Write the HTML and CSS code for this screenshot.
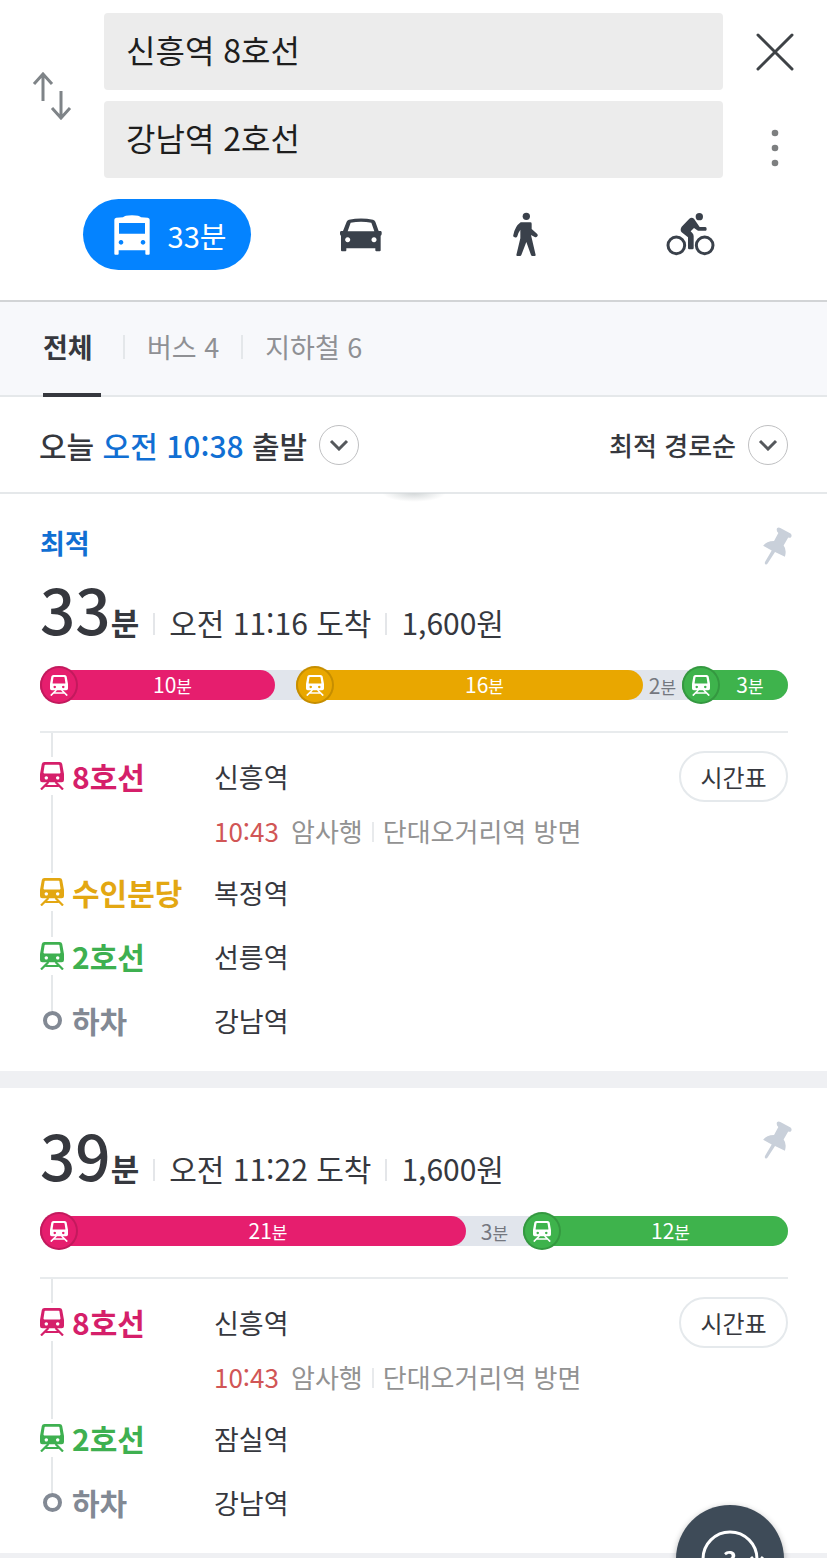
FILE: index.html
```html
<!DOCTYPE html>
<html lang="ko">
<head>
    <meta charset="UTF-8">
    <meta name="viewport" content="width=device-width, initial-scale=1.0">
    <title>신흥역 8호선 - 강남역 2호선</title>
    <link rel="stylesheet" href="styles.css">
</head>
<body>
    <!-- Shared icons -->
    <svg class="symbols" aria-hidden="true">
        <symbol id="train" viewBox="0 0 24 28">
            <path fill-rule="evenodd" d="M4.500 0h15q2.300 0 2.700 2L24 12v6q0 2.300-2.300 2.300H2.300Q0 20.300 0 18v-6L1.800 2Q2.200 0 4.500 0zM5.200 2.700Q4.700 2.700 4.600 3.200L3.500 10.600Q3.400 11.400 4.200 11.400H19.800Q20.600 11.400 20.500 10.600L19.400 3.200Q19.300 2.700 18.800 2.700zM6.300 14.200a1.700 1.700 0 1 0 .01 0zM17.700 14.200a1.700 1.700 0 1 0 .01 0z"/>
            <path d="M8.500 20L1 27.500M15.500 20l7.500 7.500M5.500 24h13" fill="none" stroke="currentColor" stroke-width="2.200"/>
        </symbol>
        <symbol id="pin" viewBox="0 0 87 115">
            <path d="M42 4Q46 0 52 3L83 20Q88 24 85 30Q82 34 76 32L62 56Q72 68 66 90L36 76L14 110Q10 116 6 112Q4 110 6 105L26 71L0 57Q10 42 33 42L46 18Q39 12 42 4z"/>
        </symbol>
        <symbol id="chevron" viewBox="0 0 20 12">
            <path d="M2 2l8 8 8-8" fill="none" stroke="currentColor" stroke-width="3"/>
        </symbol>
    </svg>

    <header class="search">
        <div class="search-row">
            <button class="swap" aria-label="출발지 도착지 바꾸기">
                <svg width="40" height="48" viewBox="0 0 40 48"><path d="M11 29V3M2 12l9-10 9 10M29 19v26M20 36l9 10 9-10"/></svg>
            </button>
            <div class="fields">
                <input type="text" aria-label="출발지" value="신흥역 8호선">
                <input type="text" aria-label="도착지" value="강남역 2호선">
            </div>
            <div class="search-side">
                <button class="close" aria-label="닫기">
                    <svg width="38" height="38" viewBox="0 0 38 38"><path d="M2 2l34 34M36 2L2 36"/></svg>
                </button>
                <button class="more" aria-label="더보기">
                    <svg width="8" height="38" viewBox="0 0 8 38"><circle cx="4" cy="4" r="3.300"/><circle cx="4" cy="19" r="3.300"/><circle cx="4" cy="34" r="3.300"/></svg>
                </button>
            </div>
        </div>
        <nav class="modes">
            <button class="mode active">
                <svg width="36" height="40" viewBox="345 644 108 120"><path fill-rule="evenodd" d="M372 651Q376 645 399 645T426 651L446 652Q452 653 452 658V760Q452 763 449 763H442Q439 763 439 760V750H359V760Q359 763 356 763H349Q346 763 346 760V658Q346 653 352 652zM360 668V700H438V668zM366 719a7 7 0 1 0 .1 0zM432 719a7 7 0 1 0 .1 0z"/></svg>
                <span>33분</span>
            </button>
            <button class="mode" aria-label="자동차">
                <svg width="42" height="34" viewBox="1021 653 126 102"><path fill-rule="evenodd" d="M1048 658Q1084 651 1120 658Q1125 659 1127 664L1137 692H1143Q1147 693 1146 700Q1146 705 1143 706V750Q1143 753 1140 753H1130Q1127 753 1127 750V744H1040V750Q1040 753 1037 753H1027Q1024 753 1024 750V706Q1021 705 1021 700Q1020 693 1024 692H1030L1041 664Q1043 659 1048 658zM1053 667L1044 693H1124L1115 667Q1084 662 1053 667zM1044 711a7.500 7.500 0 1 0 .1 0zM1123 711a7.500 7.500 0 1 0 .1 0z"/></svg>
            </button>
            <button class="mode" aria-label="도보">
                <svg width="25" height="45" viewBox="280 637 75 135"><circle cx="320" cy="650" r="11"/><path d="M303 668H332Q336 668 336 672V688L352 702Q356 706 353 710T345 712L334 706L348 766Q348 769 345 769H338Q335 769 334 766L320 727L305 766Q304 769 301 769H293Q290 769 290 766L302 716V690Q296 698 293 710Q291 715 285 713T281 706Q286 680 303 668z"/></svg>
            </button>
            <button class="mode" aria-label="자전거">
                <svg width="49" height="45" viewBox="738 636 147 135"><g fill="none" stroke="currentColor" stroke-width="9"><circle cx="769" cy="736" r="25"/><circle cx="854" cy="736" r="25"/></g><circle cx="838" cy="650" r="11"/><path d="M808 656Q815 650 822 656L839 681H856Q860 681 860 687T856 692H834L822 684L812 694L817 699Q821 703 821 709V744Q821 748 817 748H808Q804 748 804 744V712L785 697Q779 690 785 680z"/></svg>
            </button>
        </nav>
    </header>

    <nav class="tabs">
        <a href="#" class="tab active">전체</a>
        <a href="#" class="tab">버스 4</a>
        <a href="#" class="tab">지하철 6</a>
    </nav>

    <div class="filters">
        <button class="filter">
            <span>오늘 <b>오전 10:38</b> 출발</span>
            <span class="round"><svg width="20" height="12"><use href="#chevron"/></svg></span>
        </button>
        <button class="filter sort">
            <span>최적 경로순</span>
            <span class="round"><svg width="20" height="12"><use href="#chevron"/></svg></span>
        </button>
    </div>

    <main>
        <article class="route">
            <div class="route-head">
                <div>
                    <p class="badge">최적</p>
                    <h2 class="summary">
                        <span class="total">33<small>분</small></span>
                        <span class="info">오전 11:16 도착</span>
                        <span class="info">1,600원</span>
                    </h2>
                </div>
                <button class="pin" aria-label="경로 고정"><svg width="29" height="38"><use href="#pin"/></svg></button>
            </div>
            <div class="bar">
                <div class="seg line8" style="flex-grow: 235"><span class="stop"><svg width="18" height="21"><use href="#train"/></svg></span><span class="time">10<small>분</small></span></div>
                <div class="walk" style="flex-grow: 21"></div>
                <div class="seg suin" style="flex-grow: 347"><span class="stop"><svg width="18" height="21"><use href="#train"/></svg></span><span class="time">16<small>분</small></span></div>
                <div class="walk" style="flex-grow: 39">2<small>분</small></div>
                <div class="seg line2" style="flex-grow: 106"><span class="stop"><svg width="18" height="21"><use href="#train"/></svg></span><span class="time">3<small>분</small></span></div>
            </div>
            <ol class="steps">
                <li class="step first">
                    <span class="line text8"><span class="mark"><svg width="24" height="28"><use href="#train"/></svg></span>8호선</span>
                    <span class="station">신흥역</span>
                    <button class="timetable">시간표</button>
                    <p class="next"><em>10:43</em> <span>암사행</span> <span>단대오거리역 방면</span></p>
                </li>
                <li class="step">
                    <span class="line text-suin"><span class="mark"><svg width="24" height="28"><use href="#train"/></svg></span>수인분당</span>
                    <span class="station">복정역</span>
                </li>
                <li class="step">
                    <span class="line text2"><span class="mark"><svg width="24" height="28"><use href="#train"/></svg></span>2호선</span>
                    <span class="station">선릉역</span>
                </li>
                <li class="step last">
                    <span class="line"><span class="mark"><i class="dot"></i></span>하차</span>
                    <span class="station">강남역</span>
                </li>
            </ol>
        </article>

        <article class="route">
            <div class="route-head">
                <h2 class="summary">
                    <span class="total">39<small>분</small></span>
                    <span class="info">오전 11:22 도착</span>
                    <span class="info">1,600원</span>
                </h2>
                <button class="pin" aria-label="경로 고정"><svg width="29" height="38"><use href="#pin"/></svg></button>
            </div>
            <div class="bar">
                <div class="seg line8" style="flex-grow: 426"><span class="stop"><svg width="18" height="21"><use href="#train"/></svg></span><span class="time">21<small>분</small></span></div>
                <div class="walk" style="flex-grow: 57">3<small>분</small></div>
                <div class="seg line2" style="flex-grow: 265"><span class="stop"><svg width="18" height="21"><use href="#train"/></svg></span><span class="time">12<small>분</small></span></div>
            </div>
            <ol class="steps">
                <li class="step first">
                    <span class="line text8"><span class="mark"><svg width="24" height="28"><use href="#train"/></svg></span>8호선</span>
                    <span class="station">신흥역</span>
                    <button class="timetable">시간표</button>
                    <p class="next"><em>10:43</em> <span>암사행</span> <span>단대오거리역 방면</span></p>
                </li>
                <li class="step">
                    <span class="line text2"><span class="mark"><svg width="24" height="28"><use href="#train"/></svg></span>2호선</span>
                    <span class="station">잠실역</span>
                </li>
                <li class="step last">
                    <span class="line"><span class="mark"><i class="dot"></i></span>하차</span>
                    <span class="station">강남역</span>
                </li>
            </ol>
        </article>
    </main>

    <button class="refresh" aria-label="새로고침">
        <svg width="72" height="60" viewBox="0 0 72 60"><circle cx="36" cy="30" r="27"/><path d="M57 28l6 7 6-7"/></svg>
        <span>3</span>
    </button>
</body>
</html>
```
FILE: styles.css
```css
* {
    box-sizing: border-box;
}
body {
    font-family: "Noto Sans CJK KR", sans-serif;
    margin: 0;
    background-color: #eff0f3;
    color: #36383e;
    overflow-x: hidden;
}
button {
    font-family: inherit;
    color: inherit;
    padding: 0;
    background: none;
    border: none;
    cursor: pointer;
}
svg {
    display: block;
    fill: currentColor;
}
h2, p, ol {
    margin: 0;
    padding: 0;
    font-weight: 400;
}
.symbols {
    display: none;
}

/* Search header */
.search {
    background: #fff;
    padding-top: 13px;
    border-bottom: 2px solid #d2d4d6;
}
.search-row {
    display: flex;
}
.swap,
.search-side {
    width: 104px;
    display: flex;
    align-items: center;
    justify-content: center;
}
.swap svg {
    fill: none;
    stroke: #7f8488;
    stroke-width: 3;
}
.fields {
    flex: 1;
    display: flex;
    flex-direction: column;
    gap: 11px;
}
.fields input {
    width: 100%;
    height: 77px;
    padding: 0 22px 6px;
    border: none;
    border-radius: 4px;
    background: #ececec;
    color: #1e1e1e;
    font-family: inherit;
    font-size: 32px;
}
.search-side {
    flex-direction: column;
    justify-content: space-between;
}
.search-side button {
    display: flex;
    align-items: center;
    justify-content: center;
    width: 60px;
}
.close {
    height: 77px;
}
.close svg {
    stroke: #3e4246;
    stroke-width: 3;
    stroke-linecap: round;
}
.more {
    height: 60px;
    color: #7d7f80;
}
.modes {
    display: grid;
    grid-template-columns: 195px 1fr 1fr 1fr;
    padding: 21px 54px 30px 83px;
    color: #3a414b;
}
.mode {
    display: flex;
    align-items: center;
    justify-content: center;
    gap: 18px;
    height: 71px;
    font-size: 29px;
}
.mode.active {
    width: 168px;
    padding-left: 6px;
    border-radius: 36px;
    background: #0483ff;
    color: #fff;
}

/* Tabs */
.tabs {
    display: flex;
    height: 95px;
    padding-left: 43px;
    background: #f7f8fb;
    border-bottom: 2px solid #e5e8ea;
}
.tab {
    display: flex;
    align-items: center;
    height: 95px;
    padding-bottom: 6px;
    color: #8f9094;
    font-size: 27px;
    text-decoration: none;
}
.tab.active {
    width: 58px;
    padding-bottom: 2px;
    border-bottom: 4px solid #36383e;
    color: #36383e;
    font-weight: 700;
}
.tab + .tab::before {
    content: "";
    width: 2px;
    height: 24px;
    margin: 0 22px;
    background: #e4e7ea;
}

/* Departure time and sorting */
.filters {
    display: flex;
    justify-content: space-between;
    align-items: center;
    position: relative;
    height: 97px;
    padding: 0 39px;
    background: #fff;
    border-bottom: 2px solid #e5e8ea;
}
.filters::after {
    content: "";
    position: absolute;
    left: 50%;
    top: 96px;
    width: 64px;
    height: 9px;
    margin-left: -32px;
    background: radial-gradient(ellipse at top, #d3d7d8, transparent 70%);
}
.filter {
    display: flex;
    align-items: center;
    gap: 12px;
    font-size: 30px;
    font-weight: 500;
}
.filter b {
    color: #116fd3;
    font-weight: 500;
}
.filter.sort {
    font-size: 26px;
}
.round {
    display: flex;
    align-items: center;
    justify-content: center;
    width: 40px;
    height: 40px;
    border: 1px solid #bfc0c2;
    border-radius: 50%;
    color: #55585c;
}

/* Route cards */
.route {
    padding: 33px 39px 19px 40px;
    background: #fff;
}
.route + .route {
    margin-top: 17px;
}
.route-head {
    display: flex;
    justify-content: space-between;
    align-items: flex-start;
}
.pin {
    margin-right: -4px;
    color: #c9d0da;
}
.badge {
    height: 48px;
    line-height: 32px;
    color: #116fd3;
    font-size: 27px;
    font-weight: 700;
}
.summary {
    display: flex;
    align-items: baseline;
    height: 95px;
    line-height: 66px;
    white-space: nowrap;
}
.total {
    font-size: 62px;
    font-weight: 500;
}
.total small {
    font-size: 31px;
    font-weight: 700;
}
.info {
    font-size: 30px;
}
.info::before {
    content: "";
    display: inline-block;
    width: 2px;
    height: 22px;
    margin: 0 14px;
    background: #e4e6e9;
}
.bar {
    display: flex;
    height: 30px;
    border-radius: 15px;
    background: #e1e5ec;
    font-size: 21px;
    line-height: 30px;
}
.bar small {
    font-size: 17px;
}
.seg {
    display: flex;
    align-items: center;
    flex-basis: 0;
    border-radius: 15px;
    color: #fff;
}
.stop {
    display: flex;
    align-items: center;
    justify-content: center;
    flex: none;
    width: 38px;
    height: 38px;
    border: 2px solid rgba(0, 0, 0, 0.15);
    border-radius: 50%;
    background: inherit;
}
.time {
    flex: 1;
    padding-right: 8px;
    text-align: center;
}
.walk {
    flex-basis: 0;
    color: #74777f;
    text-align: center;
    white-space: nowrap;
}
.line8 {
    background: #e61e6e;
}
.suin {
    background: #e9a700;
}
.line2 {
    background: #3eb34c;
}

/* Step list */
.steps {
    position: relative;
    margin-top: 31px;
    border-top: 2px solid #e8ebed;
    list-style: none;
}
.steps::before {
    content: "";
    position: absolute;
    left: 11px;
    top: 0;
    bottom: 40px;
    width: 2px;
    background: #e5e8ea;
}
.step {
    display: grid;
    grid-template-columns: 174px 1fr auto;
    grid-auto-rows: 64px;
    align-items: center;
}
.step.first {
    grid-template-rows: 64px 44px;
    padding: 11px 0 8px;
}
.line {
    display: flex;
    align-items: center;
    gap: 8px;
    color: #828994;
    font-size: 30px;
    font-weight: 700;
}
.mark {
    position: relative;
    display: flex;
    align-items: center;
    justify-content: center;
    width: 24px;
    padding: 5px 0;
    background: #fff;
}
.last .mark {
    padding: 0;
}
.dot {
    width: 19px;
    height: 19px;
    border: 4px solid #828994;
    border-radius: 50%;
}
.text8 {
    color: #d51f6a;
}
.text-suin {
    color: #e3a712;
}
.text2 {
    color: #3eb050;
}
.station {
    font-size: 27px;
}
.timetable {
    width: 109px;
    height: 51px;
    border: 2px solid #e5e9ec;
    border-radius: 26px;
    background: #fff;
    font-size: 24px;
}
.next {
    display: flex;
    align-items: center;
    grid-column: 2 / 4;
    color: #929292;
    font-size: 26px;
}
.next em {
    margin-right: 12px;
    color: #d15656;
    font-style: normal;
}
.next span + span::before {
    content: "";
    display: inline-block;
    width: 2px;
    height: 20px;
    margin: 0 9px;
    background: #e8eaec;
}

/* Floating refresh button */
.refresh {
    position: fixed;
    right: 43px;
    bottom: -55px;
    display: flex;
    align-items: center;
    justify-content: center;
    width: 108px;
    height: 108px;
    border-radius: 50%;
    background: #3e4b58;
    box-shadow: 0 2px 6px rgba(0, 0, 0, 0.3);
    color: #fff;
}
.refresh svg {
    fill: none;
    stroke: #fff;
    stroke-width: 3;
}
.refresh span {
    position: absolute;
    font-size: 24px;
    font-weight: 700;
    line-height: 28px;
}
```
